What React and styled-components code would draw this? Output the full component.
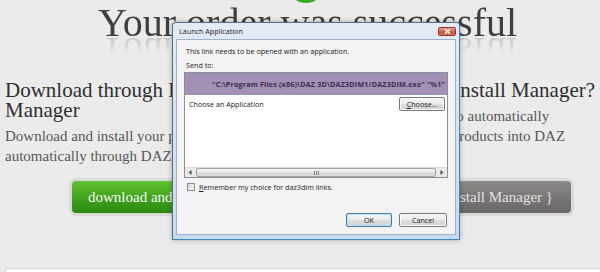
import React from "react";
import styled, { createGlobalStyle } from "styled-components";

const GlobalStyle = createGlobalStyle`
  html, body {
    margin: 0;
    padding: 0;
  }
  body {
    width: 600px;
    height: 272px;
    overflow: hidden;
    background: #ebebeb;
  }
`;

const Page = styled.div`
  position: relative;
  width: 605px;
  padding-left: 5px;
  font-family: "Liberation Serif", "Times New Roman", serif;
`;

const Header = styled.header`
  display: flex;
  flex-direction: column;
  align-items: center;
`;

const Badge = styled.div`
  width: 36px;
  height: 36px;
  margin-top: -33px;
  margin-left: -3px;
  border-radius: 50%;
  background: radial-gradient(circle at 50% 80%, #3fb52c, #1d7a12);
`;

const Title = styled.h1`
  margin: 0;
  font-size: 40px;
  line-height: 40px;
  font-weight: normal;
  color: #3f3f3f;
  -webkit-box-reflect: below -12px
    linear-gradient(transparent 45%, rgba(255, 255, 255, 0.3));
`;

const Columns = styled.section`
  display: flex;
  margin-top: 37px;
  padding-bottom: 55px;
`;

const Column = styled.div`
  display: flex;
  flex-direction: column;
  width: ${(p) => p.$width}px;
  box-sizing: border-box;
  ${(p) => p.$divider && "border-left: 1px solid #dcdcdc; padding-left: 27px;"}
`;

const Heading = styled.h2`
  margin: 0;
  font-size: 21px;
  line-height: 20px;
  font-weight: normal;
  color: #2f2f2f;
`;

const Text = styled.p`
  margin: 5.7px 0 0;
  font-size: 15px;
  line-height: 20.5px;
  color: #575757;
`;

const ActionButton = styled.a`
  align-self: ${(p) => (p.$end ? "flex-end" : "flex-start")};
  margin: 14px ${(p) => (p.$end ? "39px" : "0")} 0
    ${(p) => (p.$end ? "0" : "67px")};
  height: 32px;
  padding: 0 18px 0 16px;
  border-radius: 4px;
  font-size: 15px;
  line-height: 32px;
  white-space: pre;
  color: ${(p) => (p.$green ? "#f6f6f6" : "#e4e2e2")};
  background: ${(p) =>
    p.$green
      ? "linear-gradient(#63c231, #3fa11d 55%, #2c8a10)"
      : "linear-gradient(#8e8989, #7a7575 55%, #6a6666)"};
  box-shadow: 0 0 0 3px rgba(0, 0, 0, 0.07);
  cursor: pointer;
`;

const Footer = styled.footer`
  height: 3px;
  background: #fdfdfd;
  border-top: 1px solid #d6d6d6;
  border-left: 1px solid #dedede;
`;

/* Windows 7 style "Launch Application" dialog */

const Dialog = styled.div`
  position: absolute;
  left: 172px;
  top: 22px;
  width: 288px;
  height: 218px;
  box-sizing: border-box;
  display: flex;
  flex-direction: column;
  padding: 0 3px 4px;
  border: 1px solid #54708f;
  border-right-color: #3f86b9;
  border-bottom-color: #3f86b9;
  border-radius: 4px 4px 0 0;
  background: linear-gradient(#e3ebf5, #c9d9ec);
  box-shadow: 0 0 5px rgba(0, 0, 0, 0.3);
  font-family: "Open Sans", "Noto Sans", sans-serif;
  font-size: 7.2px;
  color: #1c1c1c;
`;

const TitleBar = styled.div`
  display: flex;
  justify-content: space-between;
  align-items: center;
  height: 16px;
  padding-left: 3px;
`;

const CloseButton = styled.div`
  align-self: flex-start;
  display: flex;
  align-items: center;
  justify-content: center;
  width: 18px;
  height: 9px;
  margin-top: 4px;
  box-sizing: border-box;
  border: 1px solid #8a3a2c;
  border-radius: 2px;
  background: linear-gradient(#e9a493, #d2644d 50%, #c4452d 51%, #d8785e);
`;

const Client = styled.div`
  flex: 1;
  display: flex;
  flex-direction: column;
  padding: 6px 8px 7px 9px;
  border: 1px solid #9db3cb;
  background: #f3f3f3;
`;

const Line = styled.div`
  line-height: 10px;
  margin-top: ${(p) => p.$top || 0}px;
`;

const ListView = styled.div`
  display: flex;
  flex-direction: column;
  width: 264px;
  height: 106px;
  box-sizing: border-box;
  margin: 2px 0 0 -2px;
  border: 1px solid #8a9099;
  background: #fff;
`;

const SelectedRow = styled.div`
  display: flex;
  align-items: center;
  justify-content: flex-end;
  height: 22px;
  padding-right: 2px;
  background: #a390b5;
  color: #3d2b52;
  font-weight: bold;
  letter-spacing: 0.17px;
  white-space: nowrap;
  overflow: hidden;
`;

const ChooseRow = styled.div`
  display: flex;
  align-items: center;
  justify-content: space-between;
  height: 17px;
  padding: 0 2px 0 4px;
`;

const WinButton = styled.div`
  display: flex;
  align-items: center;
  justify-content: center;
  width: ${(p) => p.$w}px;
  height: 14px;
  box-sizing: border-box;
  border: 1px solid ${(p) => (p.$default ? "#3c7fb1" : "#7a7a7a")};
  border-radius: 2px;
  background: linear-gradient(#f4f4f4, #ececec 50%, #dedede 51%, #d1d1d1);
  box-shadow: ${(p) =>
    p.$default ? "inset 0 0 0 1px #bfe2f6" : "inset 0 0 0 1px #fbfbfb"};
  color: #1c1c1c;
`;

const Spacer = styled.div`
  flex: 1;
`;

const ScrollBar = styled.div`
  display: flex;
  height: 9px;
  background: #e9e9e9;
  border-top: 1px solid #dcdcdc;
`;

const ScrollArrow = styled.div`
  display: flex;
  align-items: center;
  justify-content: center;
  width: 10px;
`;

const ScrollThumb = styled.div`
  flex: 1;
  display: flex;
  align-items: center;
  justify-content: center;
  margin: 0 1px;
  border: 1px solid #a3a3a3;
  border-radius: 2px;
  background: linear-gradient(#f6f6f6, #e3e3e3 50%, #d6d6d6 51%, #dcdcdc);
`;

const CheckRow = styled.label`
  display: flex;
  align-items: center;
  gap: 4px;
  height: 10px;
  margin: 4px 0 0 1px;
`;

const CheckBox = styled.span`
  width: 8px;
  height: 8px;
  box-sizing: border-box;
  border: 1px solid #8e8f8f;
  background: linear-gradient(135deg, #d9d9d9, #f7f7f7);
`;

const ButtonRow = styled.div`
  display: flex;
  justify-content: flex-end;
  gap: 7px;
  margin-top: auto;
`;

const Key = styled.span`
  text-decoration: underline;
`;

const Arrow = ({ dir }) => (
  <svg width="4" height="5" viewBox="0 0 4 5">
    <path d={dir === "left" ? "M3.5 0 L0.5 2.5 L3.5 5Z" : "M0.5 0 L3.5 2.5 L0.5 5Z"} fill="#4a4a4a" />
  </svg>
);

function App() {
  return (
    <Page>
      <GlobalStyle />
      <Header>
        <Badge />
        <Title>Your order was successful</Title>
      </Header>

      <Columns>
        <Column $width={290}>
          <Heading>Download through DAZ Install Manager</Heading>
          <Text>
            Download and install your products automatically through DAZ
            Install Manager.
          </Text>
          <ActionButton $green>download and install</ActionButton>
        </Column>
        <Column $width={315} $divider>
          <Heading>What is DAZ's Install Manager?</Heading>
          <Text>
            The DIM allows you to automatically download and install products
            into DAZ Studio.
          </Text>
          <ActionButton $end>{"{ Learn about Install Manager }"}</ActionButton>
        </Column>
      </Columns>
      <Footer />

      <Dialog>
        <TitleBar>
          <span>Launch Application</span>
          <CloseButton>
            <svg width="7" height="5" viewBox="0 0 7 5">
              <path d="M1 0.5 L6 4.5 M6 0.5 L1 4.5" stroke="#fff" strokeWidth="1.4" />
            </svg>
          </CloseButton>
        </TitleBar>
        <Client>
          <Line>This link needs to be opened with an application.</Line>
          <Line $top={4}>Send to:</Line>
          <ListView>
            <SelectedRow>
              {'"C:\\Program Files (x86)\\DAZ 3D\\DAZ3DIM1/DAZ3DIM.exe" "%1"'}
            </SelectedRow>
            <ChooseRow>
              <span>Choose an Application</span>
              <WinButton $w={46}>
                <span>
                  <Key>C</Key>hoose...
                </span>
              </WinButton>
            </ChooseRow>
            <Spacer />
            <ScrollBar>
              <ScrollArrow>
                <Arrow dir="left" />
              </ScrollArrow>
              <ScrollThumb>
                <svg width="5" height="4" viewBox="0 0 5 4">
                  <path d="M0.5 0 V4 M2.5 0 V4 M4.5 0 V4" stroke="#6e6e6e" strokeWidth="0.8" />
                </svg>
              </ScrollThumb>
              <ScrollArrow>
                <Arrow dir="right" />
              </ScrollArrow>
            </ScrollBar>
          </ListView>
          <CheckRow>
            <CheckBox />
            <span>
              <Key>R</Key>emember my choice for daz3dim links.
            </span>
          </CheckRow>
          <ButtonRow>
            <WinButton $w={46} $default>
              OK
            </WinButton>
            <WinButton $w={48}>Cancel</WinButton>
          </ButtonRow>
        </Client>
      </Dialog>
    </Page>
  );
}

export default App;
